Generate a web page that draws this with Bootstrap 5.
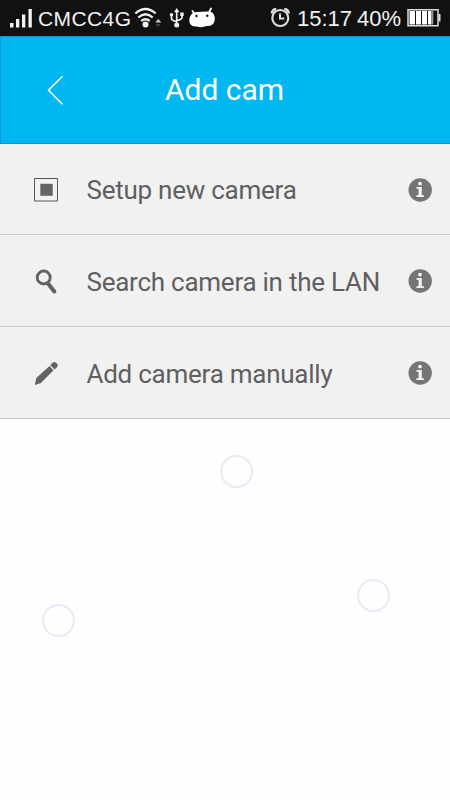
<!DOCTYPE html>
<html lang="en">
<head>
<meta charset="utf-8">
<meta name="viewport" content="width=device-width, initial-scale=1">
<title>Add cam</title>
<link href="https://cdn.jsdelivr.net/npm/bootstrap@5.3.0/dist/css/bootstrap.min.css" rel="stylesheet">
<style>
body { font-family: Roboto, "Liberation Sans", sans-serif; background: #fefefe; }
svg { display: block; flex: none; }
.screen { width: 450px; height: 800px; }
.status { height: 36px; background: #111; color: #f2f2f2; font: 20px/36px "Liberation Sans", Arial, sans-serif; white-space: nowrap; }
.carrier { width: 96px; margin-left: 4px; font-size: 21px; letter-spacing: .4px; padding-top: 2px; }
.clock { width: 59px; margin-left: 5px; font-size: 22px; padding-top: 1px; }
.power { width: 48px; margin-left: 1px; font-size: 22px; padding-top: 1px; }
.topbar { height: 108px; background: #00b7f1; border: 1px solid #0799cd; border-right: 0; }
.page-title { width: 385px; padding: 0 0 0 101px; font-size: 30px; line-height: 36px; }
.option { height: 92px; background: #f1f1f1; color: #5f5f5f; border: 0; padding: 1px 18px 0 34px; }
.list-group .option.list-group-item { border-bottom: 1px solid #ccc; }
.option:first-child { height: 91px; }
.option-label { margin-left: 27.500px; padding-top: 1px; font-size: 26px; line-height: 32px; letter-spacing: -.25px; white-space: nowrap; }
.bubble { width: 33px; height: 33px; border: 2px solid #e9e9f8; }
.bubble-top { left: 220px; top: 36px; }
.bubble-right { left: 357px; top: 160px; }
.bubble-left { left: 42px; top: 185px; }
</style>
</head>
<body>
<div class="screen d-flex flex-column overflow-hidden">
  <div class="status d-flex align-items-center">
    <svg class="signal" width="34" height="36" fill="#f2f2f2"><rect x="10" y="23" width="3.5" height="4.5"/><rect x="16" y="19" width="3.3" height="8.500"/><rect x="22" y="14.500" width="3.300" height="13"/><rect x="28.500" y="9" width="3.300" height="18.500"/></svg>
    <span class="carrier">CMCC4G</span>
    <svg width="82" height="36" viewBox="134 0 82 36" fill="none" stroke="#eee">
      <g stroke-width="2.300"><path d="M135.300 13.500Q145.500 4.500 155.700 13.500M138.300 17.500Q145.500 11 152.700 17.500M141.300 21Q145.500 17.500 149.700 21"/></g>
      <circle cx="145.500" cy="24.500" r="3" fill="#eee" stroke="none"/>
      <path d="M155.300 22.500l3-3.500 3 3.500z" fill="#ccc" stroke="none"/><path d="M155.500 24l2.700 3 2.700-3z" fill="#444" stroke="none"/>
      <path d="M176.700 10v15M171.500 15v3.500q0 2 5 3M182 14v3.500q0 2-5 3" stroke-width="1.700"/>
      <path d="M174 12.200l2.700-4.200 2.700 4.200z" fill="#eee" stroke="none"/><circle cx="171.500" cy="14.700" r="1.800" fill="#eee" stroke="none"/><path d="M180.200 12.500h3.500v3.500h-3.500z" fill="#eee" stroke="none"/><circle cx="176.700" cy="25" r="2.500" fill="#eee" stroke="none"/>
      <path d="M194.500 14l-2-3M208.500 13.500l2.500-5" stroke-width="1.800" stroke-linecap="round" stroke="#fff"/>
      <path d="M191 15Q192.500 12 197 12L207 11.500Q213 11.500 213.800 14.500Q216 19 213.500 23.500Q211 26.500 206.500 26Q201.500 28 197 26.500Q191 27 189.500 22.500Q188.700 18 191 15z" fill="#fff" stroke="none"/>
      <circle cx="196.500" cy="16" r="1.200" fill="#111" stroke="none"/><circle cx="207.300" cy="15.700" r="1.200" fill="#111" stroke="none"/>
    </svg>
    <svg class="ms-auto" width="22" height="36" viewBox="270 0 22 36" fill="none" stroke="#ddd" stroke-width="2.200">
      <circle cx="280.300" cy="18" r="8"/><path d="M280 13.500v5h4.300" stroke-width="2"/><path d="M271.800 13.500q.3-4 4.500-4.500M288.800 13.500q-.3-4-4.500-4.500" stroke-width="2.500"/>
    </svg>
    <span class="clock">15:17</span><span class="power">40%</span>
    <svg width="45" height="36" viewBox="405 0 45 36">
      <path d="M408 9.800h30v16h-30z" fill="none" stroke="#ddd" stroke-width="1.500"/><path d="M438.500 14h2v7.500h-2z" fill="#ddd"/>
      <path d="M409.500 11h5.500v13.500h-5.500zM416 11h5v13.500H416zM422 11h5v13.500h-5zM428 11h3.500v13.500H428z" fill="#fff"/><path d="M431.800 11h1.500v13.500h-1.500z" fill="#999"/>
    </svg>
  </div>

  <header class="topbar d-flex align-items-center text-white flex-shrink-0">
    <svg width="63" height="36" viewBox="1 0 63 36" fill="none" stroke="#fff" stroke-width="1.500"><path d="M62.500 4.300L48.500 18.300L62.500 32.300"/></svg>
    <h1 class="page-title fw-normal mb-0">Add cam</h1>
  </header>

  <div class="list-group list-group-flush flex-shrink-0">
    <a class="option list-group-item d-flex align-items-center">
      <svg width="25" height="25"><path d="M.5 1.500h23v22.500H.500z" fill="none" stroke="#555"/><path d="M6.300 6.800h12.400v12H6.300z" fill="#646464"/></svg>
      <span class="option-label">Setup new camera</span>
      <svg class="ms-auto" width="24" height="24"><use href="#info"/></svg>
    </a>
    <a class="option list-group-item d-flex align-items-center">
      <svg width="25" height="25" fill="none" stroke="#626262"><circle cx="9.700" cy="8.500" r="6.500" stroke-width="2.800"/><path d="M13 13.500l2 2.500" stroke-width="2.800"/><path d="M14.800 15.500l5.500 7" stroke-width="4" stroke-linecap="round" /></svg>
      <span class="option-label">Search camera in the LAN</span>
      <svg class="ms-auto" width="24" height="24"><use href="#info"/></svg>
    </a>
    <a class="option list-group-item d-flex align-items-center">
      <svg width="25" height="25" fill="#646464"><path d="M.8 24l1.500-7L15.500 5l4 4.300L7 22zM16.300 4.300l2-2.200q1.700-1.800 3.500-.6l1.300 1.300q1.500 1.700 0 3.300l-2.500 2.300z"/></svg>
      <span class="option-label">Add camera manually</span>
      <svg class="ms-auto" width="24" height="24"><use href="#info"/></svg>
    </a>
  </div>

  <main class="position-relative flex-grow-1">
    <span class="bubble bubble-top rounded-circle position-absolute"></span>
    <span class="bubble bubble-right rounded-circle position-absolute"></span>
    <span class="bubble bubble-left rounded-circle position-absolute"></span>
  </main>
</div>
<svg width="0" height="0" class="position-absolute"><defs><g id="info"><circle cx="12.200" cy="12" r="11.700" fill="#757575"/><circle cx="12" cy="5.600" r="1.900" fill="#f4f4f4"/><path d="M8.500 9h5.300v8.300h2.100v1.800H8.400v-1.800h2.200v-6.500H8.500z" fill="#f4f4f4"/></g></defs></svg>
<script src="https://cdn.jsdelivr.net/npm/bootstrap@5.3.0/dist/js/bootstrap.bundle.min.js"></script>
</body>
</html>
